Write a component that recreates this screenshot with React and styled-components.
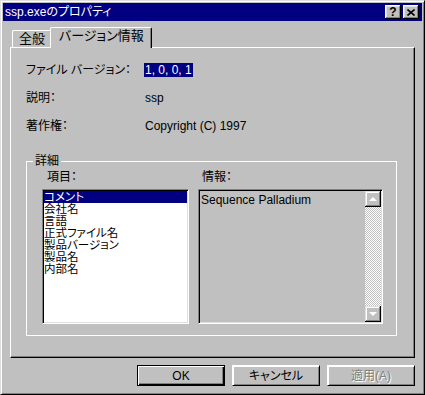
import { createGlobalStyle, styled } from 'styled-components'

const GlobalStyle = createGlobalStyle`
  html, body {
    margin: 0;
    background: #c0c0c0;
  }
  body {
    font-family: "Liberation Sans", "Noto Sans CJK JP", sans-serif;
    font-size: 12px;
    font-feature-settings: "palt";
    color: #000;
  }
`

const Window = styled.div`
  width: 425px;
  height: 395px;
  box-sizing: border-box;
  background: #c0c0c0;
  border: 1px solid;
  border-color: #dfdfdf #000 #000 #dfdfdf;
  box-shadow: inset 1px 1px #fff, inset -1px -1px #808080;
  padding: 2px;
  display: flex;
  flex-direction: column;
`

const TitleBar = styled.div`
  height: 18px;
  background: #000080;
  color: #fff;
  display: flex;
  align-items: center;
  padding: 0 3px 0 2px;
  line-height: 14px;
`

const TitleText = styled.div`
  flex: 1;
`

const TitleButton = styled.div`
  width: 16px;
  height: 14px;
  box-sizing: border-box;
  margin-left: ${p => p.$gap || 0}px;
  background: #c0c0c0;
  color: #000;
  box-shadow: inset -1px -1px #000, inset 1px 1px #fff, inset -2px -2px #808080, inset 2px 2px #dfdfdf;
  display: flex;
  align-items: center;
  justify-content: center;
  font-weight: bold;
  font-size: 12px;
  line-height: 12px;
`

const Body = styled.div`
  padding: 6px 7px 0 7px;
  display: flex;
  flex-direction: column;
`

const TabStrip = styled.div`
  height: 20px;
  display: flex;
  align-items: flex-end;
  padding-left: 2px;
`

const Tab = styled.div`
  position: relative;
  z-index: ${p => (p.$active ? 2 : 1)};
  box-sizing: border-box;
  height: ${p => (p.$active ? 21 : 17)}px;
  margin-bottom: ${p => (p.$active ? -1 : 0)}px;
  margin-left: ${p => (p.$active ? -2 : 0)}px;
  padding: ${p => (p.$active ? '1px 7px 0 8px' : '1px 6px 0 6px')};
  background: #c0c0c0;
  border: 1px solid #fff;
  border-right-color: #000;
  border-bottom: none;
  border-radius: 2px 2px 0 0;
  box-shadow: inset -1px 0 #808080;
  line-height: 14px;
  font-size: 13px;
  white-space: nowrap;
`

const Panel = styled.div`
  width: 405px;
  height: 311px;
  box-sizing: border-box;
  border: 1px solid;
  border-color: #fff #000 #000 #fff;
  box-shadow: inset -1px -1px #808080;
  padding: 15px 0 0 15px;
  display: flex;
  flex-direction: column;
`

const InfoGrid = styled.div`
  display: grid;
  grid-template-columns: 119px auto;
  grid-auto-rows: 14px;
  row-gap: 14px;
  line-height: 14px;
`

const Label = styled.div`
  white-space: nowrap;
`

const Value = styled.div`
  white-space: nowrap;
`

const Selected = styled.span`
  display: inline-block;
  margin-left: -1px;
  padding: 0 1px;
  background: #000080;
  color: #fff;
`

const GroupBox = styled.div`
  position: relative;
  margin-top: 28px;
  width: 371px;
  height: 175px;
  box-sizing: border-box;
  border: 1px solid #fff;
  padding: 8px 13px 10px 15px;
  display: grid;
  grid-template-columns: 147px 185px;
  column-gap: 9px;
`

const Legend = styled.div`
  position: absolute;
  top: -8px;
  left: 6px;
  padding: 0 2px;
  background: #c0c0c0;
  line-height: 14px;
`

const Column = styled.div`
  display: flex;
  flex-direction: column;
`

const ColumnLabel = styled.div`
  padding-left: ${p => p.$indent}px;
  line-height: 14px;
  margin-bottom: 5px;
`

const Sunken = styled.div`
  height: 135px;
  box-sizing: border-box;
  border: 1px solid;
  border-color: #808080 #fff #fff #808080;
  box-shadow: inset 1px 1px #000, inset -1px -1px #dfdfdf;
  padding: 1px;
  background: ${p => (p.$readonly ? '#c0c0c0' : '#fff')};
`

const ListItem = styled.div`
  line-height: 12px;
  height: 12px;
  font-size: 11.5px;
  white-space: nowrap;
  overflow: hidden;
  background: ${p => (p.$selected ? '#000080' : 'transparent')};
  color: ${p => (p.$selected ? '#fff' : '#000')};
`

const InfoBox = styled(Sunken)`
  display: flex;
`

const InfoText = styled.div`
  flex: 1;
  padding: 2px 0 0 1px;
  line-height: 14px;
`

const ScrollBar = styled.div`
  width: 16px;
  display: flex;
  flex-direction: column;
`

const ScrollButton = styled.div`
  width: 16px;
  height: 16px;
  box-sizing: border-box;
  background: #c0c0c0;
  box-shadow: inset -1px -1px #000, inset 1px 1px #dfdfdf, inset -2px -2px #808080, inset 2px 2px #fff;
  display: flex;
  align-items: center;
  justify-content: center;
`

const ScrollTrack = styled.div`
  flex: 1;
  background-image: repeating-conic-gradient(#fff 0 25%, #c0c0c0 0 50%);
  background-size: 2px 2px;
`

const ButtonRow = styled.div`
  display: flex;
  justify-content: flex-end;
  gap: 7px;
  margin-top: 7px;
`

const Button = styled.div`
  width: 88px;
  height: 21px;
  box-sizing: border-box;
  background: #c0c0c0;
  display: flex;
  align-items: center;
  justify-content: center;
  line-height: 14px;
  border: 1px solid ${p => (p.$default ? '#000' : 'transparent')};
  box-shadow: ${p =>
    p.$default
      ? 'inset 1px 1px #fff, inset -1px -1px #000, inset -2px -2px #808080'
      : 'inset 1px 1px #fff, inset -1px -1px #808080'};
  ${p => !p.$default && 'border-color: #fff #000 #000 #fff;'}
  color: ${p => (p.$disabled ? '#808080' : '#000')};
  text-shadow: ${p => (p.$disabled ? '1px 1px #fff' : 'none')};
`

const items = ['コメント', '会社名', '言語', '正式ファイル名', '製品バージョン', '製品名', '内部名']

function Arrow({ down }) {
  return (
    <svg width="8" height="5" viewBox="0 0 8 5">
      <polygon points={down ? '0,0 8,0 4,4' : '4,0 8,4 0,4'} fill="#fff" />
    </svg>
  )
}

export default function App() {
  return (
    <>
      <GlobalStyle />
      <Window>
        <TitleBar>
          <TitleText>ssp.exeのプロパティ</TitleText>
          <TitleButton>?</TitleButton>
          <TitleButton $gap={2}>
            <svg width="8" height="7" viewBox="0 0 8 7">
              <path d="M0.5 0.5 L7.5 6.5 M7.5 0.5 L0.5 6.5" stroke="#000" strokeWidth="1.6" />
            </svg>
          </TitleButton>
        </TitleBar>
        <Body>
          <TabStrip>
            <Tab>全般</Tab>
            <Tab $active>バージョン情報</Tab>
          </TabStrip>
          <Panel>
            <InfoGrid>
              <Label>ファイル バージョン：</Label>
              <Value><Selected>1, 0, 0, 1</Selected></Value>
              <Label>説明：</Label>
              <Value>ssp</Value>
              <Label>著作権：</Label>
              <Value>Copyright (C) 1997</Value>
            </InfoGrid>
            <GroupBox>
              <Legend>詳細</Legend>
              <Column>
                <ColumnLabel $indent={5}>項目：</ColumnLabel>
                <Sunken>
                  {items.map((it, i) => (
                    <ListItem key={it} $selected={i === 0}>{it}</ListItem>
                  ))}
                </Sunken>
              </Column>
              <Column>
                <ColumnLabel $indent={4}>情報：</ColumnLabel>
                <InfoBox $readonly>
                  <InfoText>Sequence Palladium</InfoText>
                  <ScrollBar>
                    <ScrollButton><Arrow /></ScrollButton>
                    <ScrollTrack />
                    <ScrollButton><Arrow down /></ScrollButton>
                  </ScrollBar>
                </InfoBox>
              </Column>
            </GroupBox>
          </Panel>
          <ButtonRow>
            <Button $default>OK</Button>
            <Button>キャンセル</Button>
            <Button $disabled>適用(A)</Button>
          </ButtonRow>
        </Body>
      </Window>
    </>
  )
}
